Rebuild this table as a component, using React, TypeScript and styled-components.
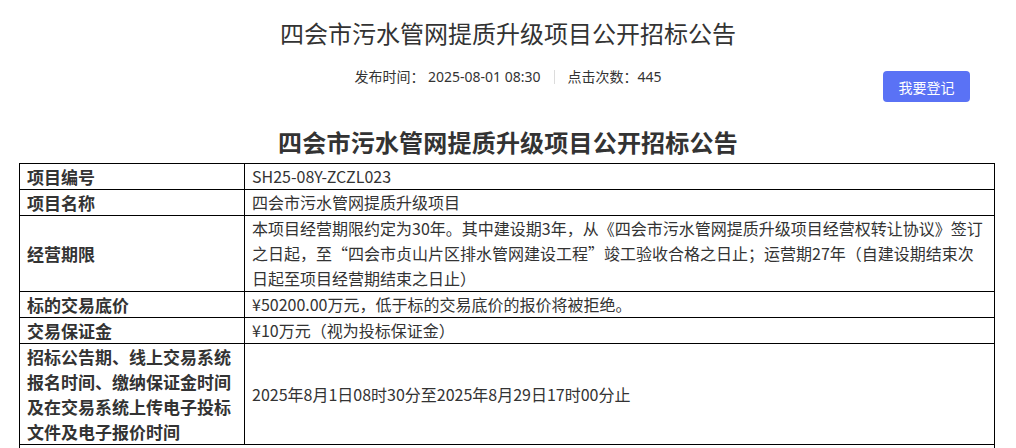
import React from "react";
import styled, { createGlobalStyle } from "styled-components";

const GlobalStyle = createGlobalStyle`
  html, body {
    margin: 0;
    padding: 0;
    background: #ffffff;
  }
  body {
    font-family: "Noto Sans CJK SC", "Noto Sans", sans-serif;
    color: #333333;
  }
`;

const Page = styled.div`
  width: 1016px;
  display: flex;
  flex-direction: column;
`;

const PageTitle = styled.h1`
  margin: 17px 0 0;
  font-size: 24px;
  line-height: 32px;
  font-weight: 400;
  text-align: center;
  color: #333333;
  font-family: "Noto Sans CJK SC", sans-serif;
`;

const MetaRow = styled.div`
  margin-top: 18px;
  display: grid;
  grid-template-columns: 1fr auto 1fr;
  align-items: start;
`;

const Meta = styled.div`
  grid-column: 2;
  display: flex;
  align-items: center;
  gap: 13px;
  font-size: 14px;
  line-height: 20px;
  color: #333333;
  font-family: "Noto Sans", "Noto Sans CJK SC", sans-serif;
`;

const MetaItem = styled.span`
  white-space: nowrap;
`;

const Divider = styled.span`
  width: 1px;
  height: 14px;
  background: #dcdcdc;
`;

const RegisterButton = styled.button`
  grid-column: 3;
  justify-self: end;
  margin: 4px 46px 0 0;
  width: 87px;
  height: 31px;
  border: none;
  border-radius: 4px;
  background: #5a72f5;
  color: #ffffff;
  font-size: 14px;
  font-family: "Noto Sans CJK SC", sans-serif;
  cursor: pointer;
  padding: 0;
`;

const DocTitle = styled.h2`
  margin: 24px 0 0;
  font-size: 24px;
  line-height: 32px;
  font-weight: 700;
  text-align: center;
  color: #333333;
  letter-spacing: 0.2px;
  font-family: "Noto Sans CJK SC", serif;
`;

const InfoTable = styled.table`
  margin: 5px 0 0 19px;
  width: 976px;
  border-collapse: collapse;
  table-layout: fixed;
`;

const Cell = styled.td`
  border: 1px solid #000000;
  padding: 0 7px;
  line-height: 25px;
  vertical-align: middle;
  color: #333333;
`;

const LabelCell = styled(Cell)`
  font-size: 17px;
  font-weight: 700;
`;

const ValueCell = styled(Cell)`
  font-size: 16px;
  font-weight: 400;
`;

type Row = { label: React.ReactNode; value: React.ReactNode };

const rows: Row[] = [
  { label: "项目编号", value: "SH25-08Y-ZCZL023" },
  { label: "项目名称", value: "四会市污水管网提质升级项目" },
  {
    label: "经营期限",
    value: (
      <>
        本项目经营期限约定为30年。其中建设期3年，从《四会市污水管网提质升级项目经营权转让协议》签订
        <br />
        之日起，至“四会市贞山片区排水管网建设工程”竣工验收合格之日止；运营期27年（自建设期结束次
        <br />
        日起至项目经营期结束之日止）
      </>
    ),
  },
  { label: "标的交易底价", value: "¥50200.00万元，低于标的交易底价的报价将被拒绝。" },
  { label: "交易保证金", value: "¥10万元（视为投标保证金）" },
  {
    label: (
      <>
        招标公告期、线上交易系统
        <br />
        报名时间、缴纳保证金时间
        <br />
        及在交易系统上传电子投标
        <br />
        文件及电子报价时间
      </>
    ),
    value: "2025年8月1日08时30分至2025年8月29日17时00分止",
  },
];

export default function App() {
  return (
    <>
      <GlobalStyle />
      <Page>
        <PageTitle>四会市污水管网提质升级项目公开招标公告</PageTitle>
        <MetaRow>
          <Meta>
            <MetaItem>发布时间： 2025-08-01 08:30</MetaItem>
            <Divider />
            <MetaItem>点击次数：445</MetaItem>
          </Meta>
          <RegisterButton>我要登记</RegisterButton>
        </MetaRow>
        <DocTitle>四会市污水管网提质升级项目公开招标公告</DocTitle>
        <InfoTable>
          <colgroup>
            <col style={{ width: 225 }} />
            <col />
          </colgroup>
          <tbody>
            {rows.map((r, i) => (
              <tr key={i}>
                <LabelCell>{r.label}</LabelCell>
                <ValueCell>{r.value}</ValueCell>
              </tr>
            ))}
            <tr>
              <ValueCell colSpan={2}>{"\u00a0"}</ValueCell>
            </tr>
          </tbody>
        </InfoTable>
      </Page>
    </>
  );
}
